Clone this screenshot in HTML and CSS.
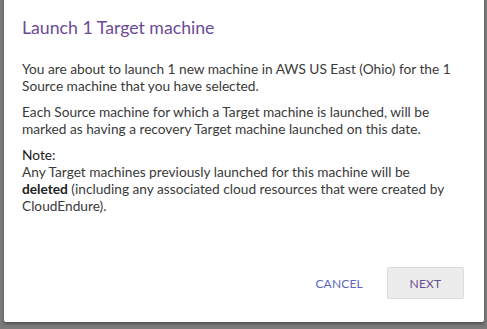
FILE: index.html
```html
<!DOCTYPE html>
<html lang="en">
<head>
  <meta charset="UTF-8">
  <title>Launch Target machine</title>
  <link rel="stylesheet" href="styles.css">
</head>
<body>
  <div class="dialog">
    <h1 class="dialog-title">Launch 1 Target machine</h1>
    <div class="dialog-body">
      <p>You are about to launch 1 new machine in AWS US East (Ohio) for the 1 Source machine that you have selected.</p>
      <p>Each Source machine for which a Target machine is launched, will be marked as having a recovery Target machine launched on this date.</p>
      <p><span class="note">Note:</span><br>Any Target machines previously launched for this machine will be <b>deleted</b> (including any associated cloud resources that were created by CloudEndure).</p>
    </div>
    <div class="dialog-actions">
      <button class="btn btn-flat">CANCEL</button>
      <button class="btn btn-raised">NEXT</button>
    </div>
  </div>
</body>
</html>
```

FILE: styles.css
```css
body {
  margin: 0;
  height: 329px;
  overflow: hidden;
  background-color: #7a7a7a;
  font-family: Lato, "Open Sans", sans-serif;
}
.dialog {
  box-sizing: border-box;
  width: 480px;
  height: 324px;
  margin: -2px 0 0 4px;
  padding: 19px 18px 0 18px;
  background-color: #fff;
  border-radius: 2px;
  box-shadow: 0 2px 3px rgba(0, 0, 0, 0.35);
  display: flex;
  flex-direction: column;
}
.dialog-title {
  margin: 0 0 21px 0;
  font-size: 17.7px;
  font-weight: normal;
  line-height: 22px;
  color: #6b4b98;
}
.dialog-body {
  flex: 1;
  padding-right: 8px;
  color: #3a3a3a;
  font-size: 13.7px;
  line-height: 17px;
}
.dialog-body p {
  margin: 0 0 9px 0;
}
.dialog-body b {
  font-weight: bold;
  color: #222;
}
.note {
  color: #222;
}
.dialog-actions {
  display: flex;
  justify-content: flex-end;
  align-items: center;
  gap: 14px;
  padding: 0 2px 23px 0;
}
.btn {
  font-family: inherit;
  font-size: 12px;
  letter-spacing: 0.2px;
  border-radius: 2px;
  cursor: pointer;
}
.btn-flat {
  border: none;
  background: none;
  color: #5b67b8;
  padding: 8px 10px;
}
.btn-raised {
  width: 77px;
  height: 32px;
  background-color: #ececec;
  border: 1px solid #dcdcdc;
  color: #6a4c93;
}
```
